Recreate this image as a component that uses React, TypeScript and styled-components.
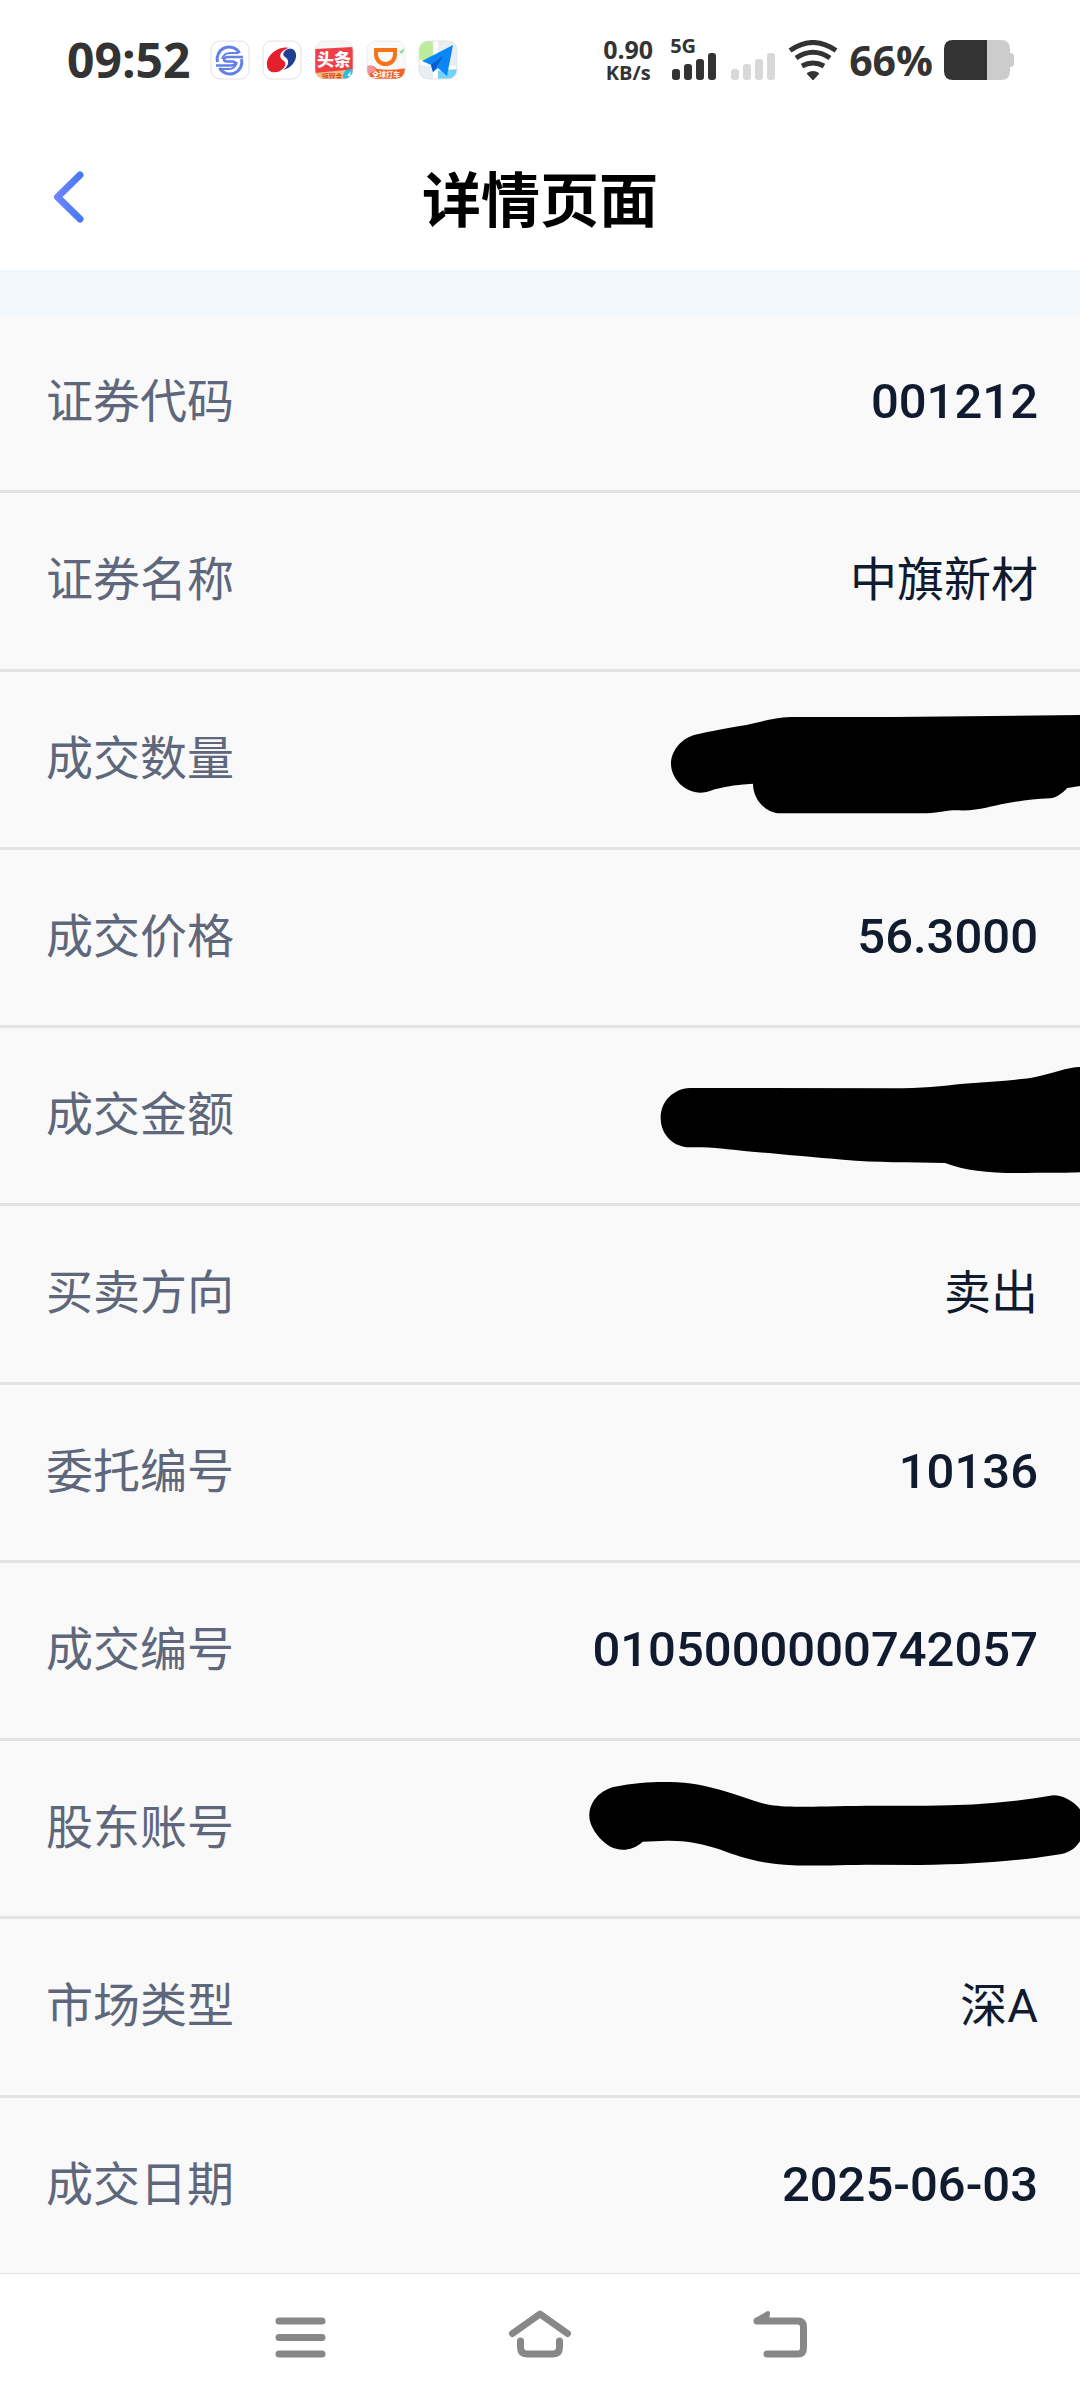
import React from "react";
import styled, { createGlobalStyle } from "styled-components";

const GlobalStyle = createGlobalStyle`
  *, *::before, *::after { box-sizing: border-box; }
  body {
    margin: 0;
    background: #ffffff;
    font-family: "Noto Sans CJK SC", "Noto Sans", sans-serif;
  }
`;

const Page = styled.div`
  display: flex;
  flex-direction: column;
  min-height: 100vh;
`;

/* ---------- status bar ---------- */

const StatusBar = styled.div`
  display: flex;
  align-items: center;
  justify-content: space-between;
  height: 120px;
  padding: 0 66px 0 67px;
  color: #333333;
  font-family: "Open Sans", "Noto Sans", sans-serif;
  font-weight: 700;
`;

const StatusGroup = styled.div<{ $gap: number }>`
  display: flex;
  align-items: center;
  gap: ${(p) => p.$gap}px;
`;

const Clock = styled.time`
  margin-right: 8px;
  font-size: 48px;
  line-height: 56px;
`;

const AppIcon = styled.svg`
  display: block;
  width: 40px;
  height: 40px;
`;

const Speed = styled.div`
  display: flex;
  flex-direction: column;
  align-items: center;
  margin-right: 6px;
`;

const SpeedValue = styled.span`
  font-size: 25px;
  line-height: 26px;
`;

const SmallText = styled.span<{ $line: number }>`
  font-size: 20px;
  line-height: ${(p) => p.$line}px;
`;

const Cellular = styled.div`
  display: flex;
  flex-direction: column;
  justify-content: flex-end;
  height: 40px;
`;

const Bars = styled.svg`
  display: block;
  flex: none;
  width: 48px;
  height: 28px;
`;

const Wifi = styled.svg`
  display: block;
  width: 50px;
  height: 40px;
`;

const Percent = styled.span`
  font-size: 41px;
  line-height: 56px;
`;

const Battery = styled.svg`
  display: block;
  width: 70px;
  height: 40px;
`;

/* ---------- title bar ---------- */

const Header = styled.header`
  display: grid;
  grid-template-columns: 120px 1fr 120px;
  align-items: center;
  height: 150px;
`;

const BackButton = styled.button`
  display: flex;
  align-items: center;
  height: 100px;
  padding: 0 0 0 50px;
  border: 0;
  background: none;
`;

const Title = styled.h1`
  margin: 0;
  padding-top: 4px;
  color: #000000;
  font-size: 59px;
  font-weight: 700;
  line-height: 80px;
  text-align: center;
`;

/* ---------- details ---------- */

const Details = styled.dl`
  display: flex;
  flex: 1;
  flex-direction: column;
  margin: 0;
  border-top: 45px solid #f1f7fa;
  background: #f9f9f9;
`;

const Row = styled.div`
  position: relative;
  display: grid;
  flex: 1 0 178px;
  grid-template-columns: auto 1fr;
  align-content: start;
  align-items: baseline;
  padding: 51px 42px 0 46px;
  border-bottom: 3px solid #e3e3e3;
  &:last-child {
    flex-basis: 175px;
    border-bottom: 0;
  }
`;

const Label = styled.dt`
  color: #5e677b;
  font-size: 47px;
  line-height: 64px;
`;

const Value = styled.dd<{ $numeric?: boolean }>`
  margin: 0;
  color: #101b2f;
  font-family: Roboto, "Noto Sans CJK SC", sans-serif;
  font-size: ${(p) => (p.$numeric ? 49 : 47)}px;
  font-weight: ${(p) => (p.$numeric ? 500 : 400)};
  line-height: 64px;
  text-align: right;
`;

const Scribble = styled.svg`
  position: absolute;
  top: 0;
  right: 0;
  width: 520px;
  height: 175px;
`;

/* ---------- system navigation ---------- */

const SystemNav = styled.nav`
  display: flex;
  justify-content: center;
  height: 127px;
  border-top: 1px solid #e0e0e0;
  background: #ffffff;
`;

const NavButton = styled.button`
  display: flex;
  flex: 0 1 240px;
  align-items: center;
  justify-content: center;
  padding: 0;
  border: 0;
  background: none;
  color: #888888;
`;

const NavIcon = styled.svg`
  width: 64px;
  height: 64px;
  fill: none;
  stroke: currentColor;
  stroke-width: 7;
  stroke-linecap: round;
  stroke-linejoin: round;
`;

type Item = { label: string; value?: string; numeric?: boolean; scribble?: string };

const items: Item[] = [
  { label: "证券代码", value: "001212", numeric: true },
  { label: "证券名称", value: "中旗新材" },
  {
    label: "成交数量",
    scribble:
      "M1560 129L1000 135H690C640 136 600 152 540 162C480 172 430 182 400 190C360 203 333 240 333 275C333 320 375 362 422 362C440 362 450 357 465 352C500 342 540 337 579 335C579 385 620 424 660 424H1100C1140 422 1160 415 1190 415C1260 418 1290 402 1340 394C1380 386 1420 381 1470 379C1490 377 1505 365 1522 348L1560 342Z",
  },
  { label: "成交价格", value: "56.3000", numeric: true },
  {
    label: "成交金额",
    scribble:
      "M390 180L1000 181C1080 181 1150 174 1210 167C1290 160 1370 158 1430 146C1480 136 1520 118 1560 117V433C1530 435 1480 434 1400 435C1300 437 1220 430 1155 405C1050 402 950 404 850 395C750 388 640 376 560 370C500 364 460 357 390 358C340 358 302 320 302 270C302 220 340 182 390 180Z",
  },
  { label: "买卖方向", value: "卖出" },
  { label: "委托编号", value: "10136", numeric: true },
  { label: "成交编号", value: "0105000000742057", numeric: true },
  {
    label: "股东账号",
    scribble:
      "M160 138C230 123 290 122 330 123C450 124 540 170 620 190C680 202 750 196 920 194H1100C1230 193 1350 185 1480 163C1510 163 1540 180 1560 205V301C1545 325 1520 340 1490 341C1370 360 1250 370 1080 372L920 371C800 373 740 375 700 373C600 368 550 350 500 333C430 305 370 298 320 299L248 302C230 318 210 326 188 326C160 326 140 312 125 297C105 277 88 250 88 225C88 180 120 150 160 138Z",
  },
  { label: "市场类型", value: "深A" },
  { label: "成交日期", value: "2025-06-03", numeric: true },
];

function SignalBars({ color }: { color: string }) {
  return (
    <Bars viewBox="0 0 48 28" fill={color} aria-hidden="true">
      <rect x="2" y="17" width="8" height="11" rx="3" />
      <rect x="14" y="12" width="8" height="16" rx="3" />
      <rect x="26" y="7" width="8" height="21" rx="3" />
      <rect x="38" y="1" width="8" height="27" rx="3" />
    </Bars>
  );
}

function Notifications() {
  return (
    <>
      <AppIcon viewBox="0 0 40 40" aria-hidden="true">
        <rect x="1" y="1" width="38" height="38" rx="9" fill="#fff" stroke="#e2e2e2" />
        <g fill="none" stroke="#6180e8" strokeWidth="3">
          <path d="M7.500 22A12 12 0 0 1 29.500 13" />
          <path d="M31.500 19A12 12 0 0 1 9.500 28" />
          <path d="M33 17H18.500Q14 17 14 19.500Q14 21.500 17 21.500H22.500Q25 21.500 25 23.500Q25 25.500 21 25.500H6" strokeWidth="2.500" />
          <path d="M12 19Q14 13 20 13H28M27 22Q25 29 19 29H11" strokeWidth="2" />
        </g>
      </AppIcon>
      <AppIcon viewBox="0 0 40 40" aria-hidden="true">
        <rect x="1" y="1" width="38" height="38" rx="9" fill="#fff" stroke="#e2e2e2" />
        <path d="M28 8C17 5 4 15 5 25C5 32 12 34 18 31C23 28 25 24 22 21C19 19 17 17 19 13C21 10 25 8 28 8Z" fill="#e5202c" />
        <path d="M26 9C21 11 20 15 23 17C28 20 27 26 21 30C29 28 35 21 34 14C33 9 30 8 26 9Z" fill="#233f94" />
      </AppIcon>
      <AppIcon viewBox="0 0 40 40" aria-hidden="true">
        <defs>
          <clipPath id="tile">
            <rect x="1" y="1" width="38" height="38" rx="9" />
          </clipPath>
        </defs>
        <g clipPath="url(#tile)">
          <rect width="40" height="40" fill="#f8f8f8" />
          <path d="M0 9L40 7V40H0Z" fill="#ee3f48" />
          <path d="M0 33L32 30V40H0Z" fill="#fbc078" />
          <circle cx="36" cy="36" r="7" fill="#25bfe2" />
          <path d="M37 31L33 36H36L35 40L39 35H36Z" fill="#fff" />
          <text x="20" y="26" textAnchor="middle" fontSize="17" fontWeight="900" fill="#fff" fontFamily="Noto Sans CJK SC">头条</text>
          <text x="18" y="39" textAnchor="middle" fontSize="7" fontWeight="700" fill="#d4452c" fontFamily="Noto Sans CJK SC">领现金</text>
        </g>
        <rect x="1" y="1" width="38" height="38" rx="9" fill="none" stroke="#e2e2e2" strokeOpacity="0.6" />
      </AppIcon>
      <AppIcon viewBox="0 0 40 40" aria-hidden="true">
        <g clipPath="url(#tile)">
          <rect width="40" height="40" fill="#fafafa" />
          <path d="M33 12L39 8L36 14Z" fill="#80df99" />
          <path d="M10 10H29V14C29 20 25 24 19.500 24S10 20 10 14Z" fill="none" stroke="#f7741b" strokeWidth="4" />
          <path d="M0 27Q6 23 11 29Q25 31 40 28V40H0Z" fill="#f26324" />
          <path d="M0 27Q7 24 10 30L0 36Z" fill="#f492a0" />
          <text x="20" y="37" textAnchor="middle" fontSize="7" fontWeight="700" fill="#fff" fontFamily="Noto Sans CJK SC">全球打车</text>
        </g>
        <rect x="1" y="1" width="38" height="38" rx="9" fill="none" stroke="#e2e2e2" strokeOpacity="0.6" />
      </AppIcon>
      <AppIcon viewBox="0 0 40 40" aria-hidden="true">
        <g clipPath="url(#tile)">
          <rect width="40" height="40" fill="#e9eef1" />
          <path d="M0 0H15V26L0 22Z" fill="#bdeb9c" />
          <path d="M15 0H20V40H15Z" fill="#fff" />
          <path d="M0 24L40 31V27L0 19Z" fill="#fff" />
          <path d="M20 31L40 29V40H20Z" fill="#70d3f7" />
          <path d="M35 5L4 21L13 25L15 32L20 28L29 36Z" fill="#0b86f7" />
          <path d="M25 16L13 25L15 32L18 28Z" fill="#075bc9" />
        </g>
        <rect x="1" y="1" width="38" height="38" rx="9" fill="none" stroke="#dfe4e6" />
      </AppIcon>
    </>
  );
}

export default function App() {
  return (
    <Page>
      <GlobalStyle />
      <StatusBar>
        <StatusGroup $gap={12}>
          <Clock>09:52</Clock>
          <Notifications />
        </StatusGroup>
        <StatusGroup $gap={11}>
          <Speed>
            <SpeedValue>0.90</SpeedValue>
            <SmallText $line={22}>KB/s</SmallText>
          </Speed>
          <Cellular>
            <SmallText $line={12}>5G</SmallText>
            <SignalBars color="#333333" />
          </Cellular>
          <Cellular>
            <SignalBars color="#d8d8d8" />
          </Cellular>
          <Wifi viewBox="0 0 50 40" aria-hidden="true">
            <g fill="none" stroke="#333333" strokeWidth="5">
              <path d="M2 10.500Q25 -5.500 48 10.500" />
              <path d="M8 18Q25 6.500 42 18" />
              <path d="M14 26Q25 20 36 26" />
            </g>
            <path d="M19 33Q25 29 31 33V34L25 40.500L19 34Z" fill="#333333" />
          </Wifi>
          <Percent>66%</Percent>
          <Battery viewBox="0 0 70 40" aria-hidden="true">
            <path d="M43 0H57Q66 0 66 9V13Q70 13 70 17V23Q70 27 66 27V31Q66 40 57 40H43Z" fill="#cccccc" />
            <path d="M43 0H9Q0 0 0 9V31Q0 40 9 40H43Z" fill="#333333" />
          </Battery>
        </StatusGroup>
      </StatusBar>

      <Header>
        <BackButton type="button" aria-label="返回">
          <svg width="36" height="56" viewBox="0 0 36 56" fill="none" aria-hidden="true">
            <defs>
              <linearGradient id="chevron" x1="3" y1="0" x2="33" y2="0" gradientUnits="userSpaceOnUse">
                <stop stopColor="#7584ff" />
                <stop offset="1" stopColor="#437af2" />
              </linearGradient>
            </defs>
            <path d="M30 8L7.500 30L30 52" stroke="url(#chevron)" strokeWidth="7" strokeLinecap="round" strokeLinejoin="round" />
          </svg>
        </BackButton>
        <Title>详情页面</Title>
      </Header>

      <Details>
        {items.map((item) => (
          <Row key={item.label}>
            <Label>{item.label}</Label>
            {item.scribble ? (
              <Value>
                <Scribble viewBox="0 0 1560 525" role="img" aria-label="已涂抹">
                  <path d={item.scribble} />
                </Scribble>
              </Value>
            ) : (
              <Value $numeric={item.numeric}>{item.value}</Value>
            )}
          </Row>
        ))}
      </Details>

      <SystemNav>
        <NavButton type="button" aria-label="最近任务">
          <NavIcon viewBox="0 0 64 64">
            <path d="M11 16H54M11 32.500H54M11 49H54" />
          </NavIcon>
        </NavButton>
        <NavButton type="button" aria-label="主页">
          <NavIcon viewBox="0 0 64 64">
            <path d="M4.500 28.500L32 9L59.500 28.500M12.500 36V42Q12.500 49 19 49H45Q51.500 49 51.500 42V36" />
          </NavIcon>
        </NavButton>
        <NavButton type="button" aria-label="返回上一页">
          <NavIcon viewBox="0 0 64 64">
            <path d="M9 16H50Q55.500 16 55.500 22V43Q55.500 49 50 49H19" />
            <path d="M8 15L20 8L19 16Z" strokeWidth="4" fill="currentColor" />
          </NavIcon>
        </NavButton>
      </SystemNav>
    </Page>
  );
}
